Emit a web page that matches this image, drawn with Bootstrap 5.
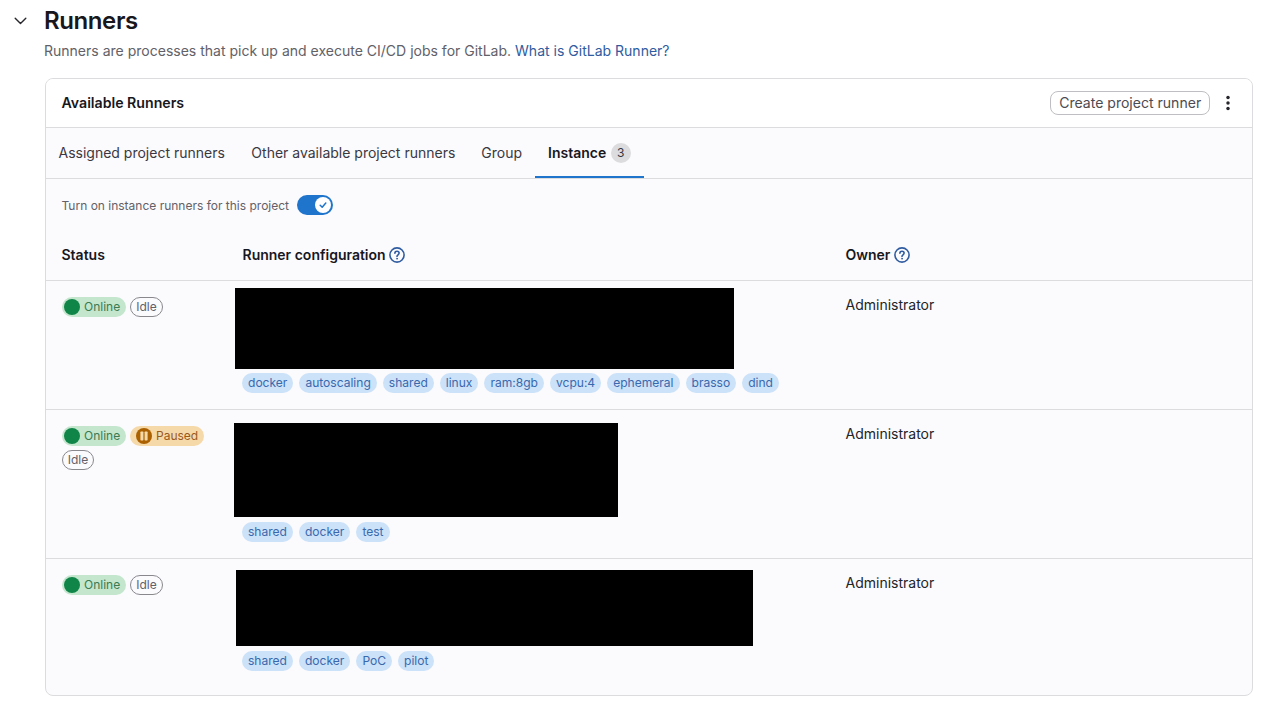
<!DOCTYPE html>
<html lang="en">
<head>
<meta charset="utf-8">
<title>Runners</title>
<link rel="stylesheet" href="https://cdn.jsdelivr.net/npm/bootstrap@5.3.0/dist/css/bootstrap.min.css">
<style>
html,body{height:703px;overflow:hidden}
body{font-family:Inter,"Liberation Sans",sans-serif;font-size:14px;color:#3a383f;background:#fff}
.page-wrap{padding:0 10px 0 12px}
.sec-head{padding-top:6px;height:78px}
.chev{width:16px;height:16px;margin-top:7px;margin-right:16px;flex:none;color:#28272d}
.sec-title{font-size:24px;line-height:30px;font-weight:600;color:#18171d;margin:0 0 5px;letter-spacing:-.4px}
.sec-desc{font-size:14.02px;line-height:20px;color:#626168;margin:0}
.sec-desc a{color:#2f5ca0;text-decoration:none}
.run-card{margin-left:33px;border:1px solid #dcdcde;border-radius:8px;background:#fbfafd;height:618px;overflow:hidden}
.run-head{height:49px;background:#fff;border-bottom:1px solid #dcdcde;padding:0 16px 0 15.5px}
.run-head-title{font-size:14.15px;font-weight:600;color:#18171d}
.make-btn{font-size:14.05px;line-height:20px;height:24px;padding:1px 7.8px;border:1px solid #bfbfc3;border-radius:8px;color:#4c4b51;background:#fff}
.kebab{width:16px;height:16px;margin-left:10px;color:#28272d}
.tab-bar{height:51px;border-bottom:1px solid #dcdcde}
.tab-item{height:50px;padding:0 13px;line-height:50px;color:#3a383f;font-size:14px;white-space:nowrap}
.tab-first{padding:0 13.5px 0 12.5px}
.tab-on{font-weight:600;color:#18171d;box-shadow:inset 0 -2px 0 #1f75cb}
.tab-count{display:inline-block;min-width:20px;height:20px;line-height:20px;border-radius:10px;background:#dcdcde;color:#3a383f;font-size:12px;font-weight:400;text-align:center;margin-left:1px;vertical-align:1px}
.switch-row{height:52px;margin-bottom:1px;padding:0 15.5px;font-size:12px;color:#626168}
.switch-text{margin-top:2px}
.tog{width:36px;height:20px;border-radius:10px;background:#1f75cb;margin-left:7.5px;position:relative;flex:none}
.tog-knob{position:absolute;right:2px;top:2px;width:16px;height:16px;border-radius:50%;background:#fff;display:flex;align-items:center;justify-content:center;color:#1f75cb}
.run-table{table-layout:fixed;width:100%;margin:0;--bs-table-bg:transparent;border-collapse:collapse}
.run-table th,.run-table td{padding:0 16px 0 15.5px;border:0;background:transparent;color:inherit;box-shadow:none}
.run-table th{height:48px;font-size:14px;font-weight:600;color:#18171d;border-bottom:1px solid #dcdcde;vertical-align:middle;padding-bottom:2px}
.run-table tbody td{vertical-align:top;padding-top:16px}
.run-table tbody td.stat-cell{padding-left:16px}
.run-table tbody tr{border-bottom:1px solid #dcdcde}
.run-table tbody tr:last-child{border-bottom:0}
.row-a{height:129px}.row-b{height:149px}.row-c{height:137px}
.col-stat{width:181px}.col-conf{width:603px}
.help{width:16px;height:16px;vertical-align:-3px;color:#2f5ca0}
.pills{display:flex;flex-wrap:wrap;gap:4px;max-width:150px}
.pill-st{display:inline-flex;align-items:center;height:20px;border-radius:10px;font-size:12px;line-height:20px;white-space:nowrap}
.pill-on{background:#c3e6cd;color:#3c7a52;padding:0 6px 0 2px;width:64px}
.pill-pau{background:#f5d9a8;color:#9a5a1e;padding:0 5px 0 6px;width:74px}
.pill-idle{border:1px solid #89888d;color:#626168;background:transparent;padding:0 5px;width:33px;justify-content:center}
.pill-wrap-idle{width:32px}
.dot-on{width:16px;height:16px;border-radius:50%;background:#108548;margin-right:4px;flex:none}
.dot-pau{width:16px;height:16px;margin-right:4px;flex:none;color:#ab6100}
.redact{background:#000;display:block}
.redact-1{width:499px;height:81px;margin:-9px 0 4px -7.5px}
.redact-2{width:384px;height:94px;margin:-3px 0 5px -8.5px}
.redact-3{width:517px;height:76px;margin:-5px 0 5px -6.5px}
.chips{display:flex;gap:6px;white-space:nowrap;margin-left:-.5px}
.chip{display:inline-block;height:20px;line-height:20px;border-radius:10px;background:#cbe2f9;color:#3a68ad;font-size:12.06px;padding:0 6px}
.owner{line-height:16px;color:#3a383f;padding-top:1px}
</style>
</head>
<body>
<main class="page-wrap">
  <section class="sec-head d-flex">
    <svg class="chev" viewBox="0 0 16 16" fill="none" stroke="currentColor" stroke-width="1.4" stroke-linecap="round" stroke-linejoin="round"><path d="M3.2 5.2l5.3 5.3 5.3-5.3"/></svg>
    <div>
      <h2 class="sec-title">Runners</h2>
      <p class="sec-desc">Runners are processes that pick up and execute CI/CD jobs for GitLab. <a href="#">What is GitLab Runner?</a></p>
    </div>
  </section>
  <div class="run-card">
    <div class="run-head d-flex align-items-center justify-content-between">
      <div class="run-head-title">Available Runners</div>
      <div class="d-flex align-items-center">
        <button type="button" class="btn make-btn">Create project runner</button>
        <svg class="kebab" viewBox="0 0 16 16" fill="currentColor"><circle cx="8" cy="2.5" r="1.75"/><circle cx="8" cy="8" r="1.75"/><circle cx="8" cy="13.5" r="1.75"/></svg>
      </div>
    </div>
    <div class="tab-bar d-flex">
      <div class="tab-item tab-first">Assigned project runners</div>
      <div class="tab-item">Other available project runners</div>
      <div class="tab-item">Group</div>
      <div class="tab-item tab-on">Instance <span class="tab-count">3</span></div>
    </div>
    <div class="switch-row d-flex align-items-center">
      <span class="switch-text">Turn on instance runners for this project</span>
      <span class="tog"><span class="tog-knob"><svg width="10" height="10" viewBox="0 0 10 10" fill="none" stroke="currentColor" stroke-width="1.5" stroke-linecap="round" stroke-linejoin="round"><path d="M2.2 5.2l2 2 3.6-4.2"/></svg></span></span>
    </div>
    <table class="table run-table">
      <colgroup><col class="col-stat"><col class="col-conf"><col></colgroup>
      <thead>
        <tr>
          <th>Status</th>
          <th>Runner configuration <svg class="help" viewBox="0 0 16 16" fill="none" stroke="currentColor" stroke-width="1.6" stroke-linecap="round"><circle cx="8" cy="8" r="7.1"/><path d="M5.9 6.2c0-1.2 1-2 2.1-2s2.1.8 2.1 1.9c0 1.7-2.1 1.7-2.1 3.3"/><circle cx="8" cy="11.7" r=".5" fill="currentColor" stroke-width=".8"/></svg></th>
          <th>Owner <svg class="help" viewBox="0 0 16 16" fill="none" stroke="currentColor" stroke-width="1.6" stroke-linecap="round"><circle cx="8" cy="8" r="7.1"/><path d="M5.9 6.2c0-1.2 1-2 2.1-2s2.1.8 2.1 1.9c0 1.7-2.1 1.7-2.1 3.3"/><circle cx="8" cy="11.7" r=".5" fill="currentColor" stroke-width=".8"/></svg></th>
        </tr>
      </thead>
      <tbody>
        <tr class="row-a">
          <td class="stat-cell"><div class="pills"><span class="pill-st pill-on"><span class="dot-on"></span>Online</span><span class="pill-st pill-idle">Idle</span></div></td>
          <td>
            <div class="redact redact-1"></div>
            <div class="chips"><span class="chip">docker</span><span class="chip">autoscaling</span><span class="chip">shared</span><span class="chip">linux</span><span class="chip">ram:8gb</span><span class="chip">vcpu:4</span><span class="chip">ephemeral</span><span class="chip">brasso</span><span class="chip">dind</span></div>
          </td>
          <td class="owner">Administrator</td>
        </tr>
        <tr class="row-b">
          <td class="stat-cell"><div class="pills"><span class="pill-st pill-on"><span class="dot-on"></span>Online</span><span class="pill-st pill-pau"><svg class="dot-pau" viewBox="0 0 16 16"><circle cx="8" cy="8" r="8" fill="currentColor"/><rect x="4.4" y="3.6" width="3" height="8.8" rx=".7" fill="#f5d9a8"/><rect x="8.6" y="3.6" width="3" height="8.8" rx=".7" fill="#f5d9a8"/></svg>Paused</span><span class="pill-st pill-idle pill-wrap-idle">Idle</span></div></td>
          <td>
            <div class="redact redact-2"></div>
            <div class="chips"><span class="chip">shared</span><span class="chip">docker</span><span class="chip">test</span></div>
          </td>
          <td class="owner">Administrator</td>
        </tr>
        <tr class="row-c">
          <td class="stat-cell"><div class="pills"><span class="pill-st pill-on"><span class="dot-on"></span>Online</span><span class="pill-st pill-idle">Idle</span></div></td>
          <td>
            <div class="redact redact-3"></div>
            <div class="chips"><span class="chip">shared</span><span class="chip">docker</span><span class="chip">PoC</span><span class="chip">pilot</span></div>
          </td>
          <td class="owner">Administrator</td>
        </tr>
      </tbody>
    </table>
  </div>
</main>
<script src="https://cdn.jsdelivr.net/npm/bootstrap@5.3.0/dist/js/bootstrap.bundle.min.js"></script>
</body>
</html>
